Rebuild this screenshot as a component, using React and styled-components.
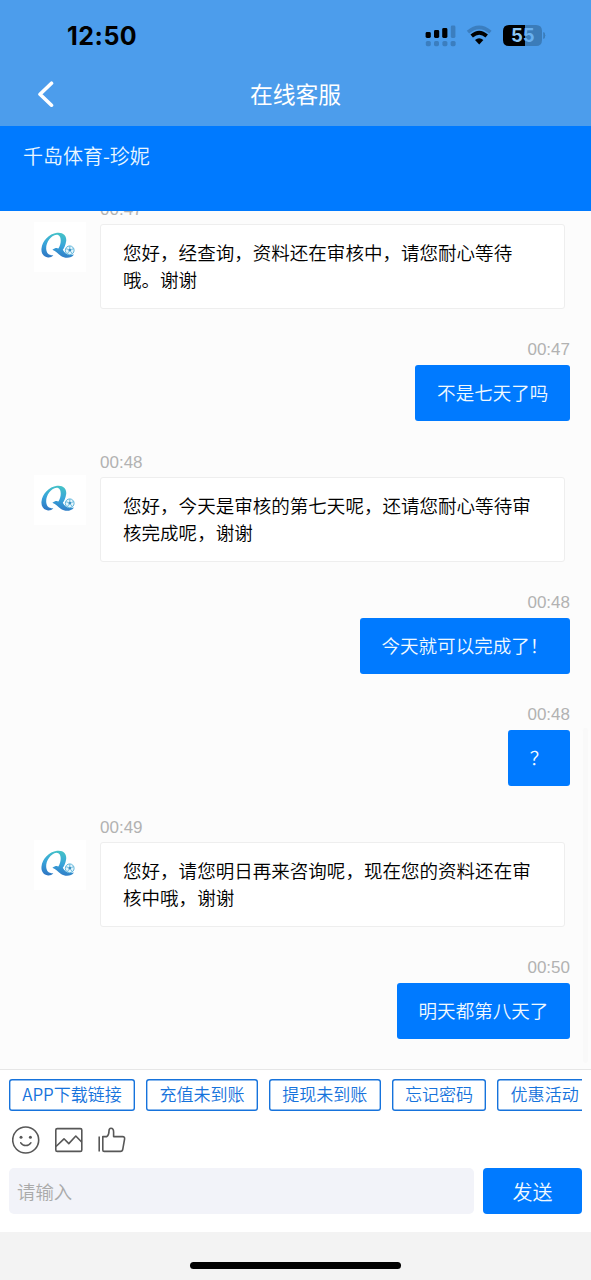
import styled, { createGlobalStyle } from 'styled-components';

const BLUE = '#007aff';
const HEADER = '#4c9dec';
const LINK = '#1673dc';

const messages = [
  { from: 'agent', time: '00:47', lines: ['您好，经查询，资料还在审核中，请您耐心等待', '哦。谢谢'] },
  { from: 'user', time: '00:47', lines: ['不是七天了吗'] },
  { from: 'agent', time: '00:48', lines: ['您好，今天是审核的第七天呢，还请您耐心等待审', '核完成呢，谢谢'] },
  { from: 'user', time: '00:48', lines: ['今天就可以完成了！'] },
  { from: 'user', time: '00:48', lines: ['？'] },
  { from: 'agent', time: '00:49', lines: ['您好，请您明日再来咨询呢，现在您的资料还在审', '核中哦，谢谢'] },
  { from: 'user', time: '00:50', lines: ['明天都第八天了'] },
];

const shortcuts = ['APP下载链接', '充值未到账', '提现未到账', '忘记密码', '优惠活动'];

export default function App() {
  return (
    <StyledPage>
      <GlobalStyle />
      <StyledHeader>
        <StyledStatus>
          <StyledClock>12:50</StyledClock>
          <StatusIcons />
        </StyledStatus>
        <StyledNav>
          <BackIcon />
          <h1>在线客服</h1>
          <span />
        </StyledNav>
      </StyledHeader>
      <StyledAgent>千岛体育-珍妮</StyledAgent>
      <StyledChat>
        {messages.map((message, i) => (
          <Message key={i} {...message} />
        ))}
        <StyledScrollbar />
      </StyledChat>
      <StyledFooter>
        <StyledShortcuts>
          {shortcuts.map((label) => (
            <StyledShortcut key={label}>{label}</StyledShortcut>
          ))}
        </StyledShortcuts>
        <StyledTools>
          <SmileIcon />
          <PictureIcon />
          <ThumbIcon />
        </StyledTools>
        <StyledForm>
          <StyledInput placeholder="请输入" />
          <StyledSend>发送</StyledSend>
        </StyledForm>
      </StyledFooter>
      <StyledHome>
        <span />
      </StyledHome>
    </StyledPage>
  );
}

function Message({ from, time, lines }) {
  const mine = from === 'user';
  return (
    <StyledMessage $mine={mine}>
      {!mine && (
        <StyledAvatar>
          <Logo />
        </StyledAvatar>
      )}
      <StyledBody $mine={mine}>
        <StyledTime $mine={mine}>{time}</StyledTime>
        <StyledBubble $mine={mine}>
          {lines.map((line) => (
            <p key={line}>{line}</p>
          ))}
        </StyledBubble>
      </StyledBody>
    </StyledMessage>
  );
}

function StatusIcons() {
  return (
    <svg width="122" height="26" viewBox="0 0 122 26">
      <g fill="#000">
        <rect x="0.6" y="9" width="5.2" height="6" rx="1.4" />
        <rect x="9" y="7" width="5.2" height="8" rx="1.4" />
        <rect x="17.2" y="5" width="5.2" height="10" rx="1.4" />
      </g>
      <g fill="#3b7ebf">
        <rect x="25.8" y="2.5" width="4.6" height="12.5" rx="1.4" />
        <rect x="0.8" y="18" width="5" height="5.2" rx="1.6" />
        <rect x="9" y="18" width="5" height="5.2" rx="1.6" />
        <rect x="17.4" y="18" width="5" height="5.2" rx="1.6" />
        <rect x="25.6" y="18" width="5" height="5.2" rx="1.6" />
      </g>
      <path d="M43 9.2 Q54.2 -0.4 65.4 9.2" fill="none" stroke="#3b7ebf" strokeWidth="3.6" />
      <path d="M46.7 13 Q54.2 6.4 61.7 13" fill="none" stroke="#000" strokeWidth="3.7" />
      <path d="M50 17 Q54.2 13.4 58.4 17 L54.2 21.6 Z" fill="#000" />
      <path d="M84 2 H100 V23 H84 Q78 23 78 17 V8 Q78 2 84 2 Z" fill="#000" />
      <path d="M100 2 H111 Q117 2 117 8 V17 Q117 23 111 23 H100 Z" fill="#3b7cb9" />
      <path d="M118.8 9.5 Q121 12.5 118.8 15.5 Z" fill="#3b7cb9" stroke="#3b7cb9" />
      <text x="97.8" y="19" textAnchor="middle" fontFamily="Inter, sans-serif" fontWeight="700" fontSize="18.5">
        <tspan fill="#8cc6f5">5</tspan>
        <tspan fill="#68b0f0">5</tspan>
      </text>
    </svg>
  );
}

function BackIcon() {
  return (
    <svg width="18" height="26" viewBox="0 0 18 26" fill="none">
      <path d="M15.5 2.2 L4 13.2 L15.5 24.2" stroke="#fff" strokeWidth="3.6" strokeLinecap="round" strokeLinejoin="round" />
    </svg>
  );
}

function Logo() {
  return (
    <svg width="36" height="30" viewBox="0 0 36 30">
      <defs>
        <linearGradient id="logo" x1="0.6" y1="0" x2="0.4" y2="1">
          <stop offset="0" stopColor="#45c3c6" />
          <stop offset="0.5" stopColor="#38a5da" />
          <stop offset="1" stopColor="#2f78c4" />
        </linearGradient>
      </defs>
      <path
        fill="url(#logo)"
        d="M16 1.8 C22 1 25.8 4.5 25.2 10 C24.6 14.5 23 17.2 21.8 18.8 C23.5 22.4 27 24.6 33 23.6 C30.5 27.4 24 27.8 20 25 C16.8 22.6 15 20 11.4 18.8 C14 16.6 15.8 16.6 17.4 17.4 C20.6 13 21 3.8 15.6 3.8 C9.5 4.6 4.8 12 5.2 18 C5.6 22.6 8 24.4 12.4 24.2 C10.8 25.8 9 26.6 7 26.4 C2.5 25.8 0 22.5 0.5 17.5 C1.2 10 8 2.8 16 1.8 Z"
      />
      <circle cx="28.7" cy="19.3" r="4.4" fill="#e3f4fb" stroke="#62b7dc" strokeWidth="1" />
      <path d="M27.3 18.5 L28.8 17.3 L30.4 18.5 L29.8 20.5 H27.8 Z" fill="#3f93c4" />
      <path d="M28.8 17.3 V15 M27.3 18.5 L24.8 17.6 M30.4 18.5 L32.8 17.6 M29.8 20.5 L31.2 22.8 M27.8 20.5 L26.5 22.8" stroke="#62b7dc" strokeWidth="0.9" />
    </svg>
  );
}

function SmileIcon() {
  return (
    <svg width="28" height="28" viewBox="0 0 28 28" fill="none" stroke="#575757" strokeWidth="1.6">
      <circle cx="13.7" cy="14" r="13" />
      <path d="M8.8 16.8 C11 20.4 16.6 20.4 18.8 16.8" strokeLinecap="round" />
      <circle cx="9" cy="11.2" r="1.5" fill="#575757" stroke="none" />
      <circle cx="18.4" cy="11.2" r="1.5" fill="#575757" stroke="none" />
    </svg>
  );
}

function PictureIcon() {
  return (
    <svg width="28" height="28" viewBox="0 0 28 28" fill="none" stroke="#575757" strokeWidth="1.6" strokeLinejoin="round">
      <rect x="0.8" y="2.6" width="26" height="22.8" rx="1.5" />
      <path d="M1 20.5 L9 12.8 L13.8 17.6 L20.8 10 L26.6 16" />
    </svg>
  );
}

function ThumbIcon() {
  return (
    <svg width="28" height="28" viewBox="0 0 28 28" fill="none" stroke="#575757" strokeWidth="1.6" strokeLinejoin="round">
      <path d="M1.2 10.5 V25.5" />
      <path d="M4.8 10.6 H8.8 C10.6 9.4 11 7.6 11 5 C11 3 11.8 2.2 13 2.2 C15 2.2 15.6 4 15.6 6 V10.6 H24.6 C26.2 10.6 26.8 11.4 26.6 12.8 L24.8 23.2 C24.6 24.6 23.8 25.4 22.4 25.4 H6.2 C5.2 25.4 4.8 24.8 4.8 24 Z" />
    </svg>
  );
}

const GlobalStyle = createGlobalStyle`
  * {
    box-sizing: border-box;
  }

  body {
    margin: 0;
    font-family: "Noto Sans CJK SC", sans-serif;
    font-weight: 350;
  }

  h1, p {
    margin: 0;
  }
`;

const StyledPage = styled.div`
  display: flex;
  flex-direction: column;
  width: 591px;
  height: 1280px;
  overflow: hidden;
  background: #fcfcfc;
`;

const StyledHeader = styled.header`
  height: 126px;
  flex-shrink: 0;
  background: ${HEADER};
`;

const StyledStatus = styled.div`
  display: flex;
  justify-content: space-between;
  align-items: center;
  height: 64px;
  padding: 7px 44px 0 67px;
`;

const StyledClock = styled.span`
  font-family: Inter, sans-serif;
  font-size: 25px;
  font-weight: 700;
  letter-spacing: 0.5px;
  color: #000;
`;

const StyledNav = styled.nav`
  display: grid;
  grid-template-columns: 60px 1fr 60px;
  align-items: center;
  height: 60px;
  padding: 0 36px;

  h1 {
    font-size: 22.8px;
    font-weight: 400;
    line-height: 34px;
    text-align: center;
    color: #fff;
  }
`;

const StyledAgent = styled.div`
  height: 85px;
  flex-shrink: 0;
  padding: 15px 23px;
  font-size: 20px;
  line-height: 30px;
  color: #e9f6ff;
  background: ${BLUE};
`;

const StyledChat = styled.main`
  position: relative;
  flex: 1;
  min-height: 0;
  display: flex;
  flex-direction: column;
  justify-content: flex-end;
  padding: 0 21px 30px 34px;
  overflow: hidden;
`;

const StyledScrollbar = styled.span`
  position: absolute;
  right: 3px;
  bottom: 6px;
  width: 5px;
  height: 335px;
  border-radius: 3px;
  background: #f9f9f9;
`;

const StyledMessage = styled.div`
  display: flex;
  flex-shrink: 0;
  justify-content: ${({ $mine }) => ($mine ? 'flex-end' : 'flex-start')};
  padding-top: ${({ $mine }) => ($mine ? '26px' : '27px')};
`;

const StyledAvatar = styled.div`
  display: flex;
  justify-content: center;
  width: 52px;
  height: 50px;
  margin: 27px 14px 0 0;
  padding: 9px 2px 0 0;
  background: #fff;
`;

const StyledBody = styled.div`
  display: flex;
  flex-direction: column;
  align-items: ${({ $mine }) => ($mine ? 'flex-end' : 'flex-start')};
`;

const StyledTime = styled.time`
  font-family: "Liberation Sans", Arial, sans-serif;
  font-size: 17px;
  font-weight: 400;
  line-height: ${({ $mine }) => ($mine ? '30px' : '29px')};
  color: #b2b2b2;
`;

const StyledBubble = styled.div`
  width: ${({ $mine }) => ($mine ? 'auto' : '465px')};
  padding: ${({ $mine }) => ($mine ? '12.5px 21.7px 16.5px' : '12.5px 22px 16.5px')};
  font-size: 18.55px;
  line-height: 27px;
  white-space: nowrap;
  color: ${({ $mine }) => ($mine ? '#f0f9ff' : '#000')};
  background: ${({ $mine }) => ($mine ? BLUE : '#fff')};
  border: ${({ $mine }) => ($mine ? 'none' : '1px solid #eee')};
  border-radius: 3px;
`;

const StyledFooter = styled.footer`
  display: flex;
  flex-direction: column;
  flex-shrink: 0;
  height: 163px;
  padding: 9px 9px 0;
  border-top: 1px solid #e6e6e6;
  background: #fff;
`;

const StyledShortcuts = styled.div`
  display: flex;
  gap: 11.2px;
  overflow: hidden;
`;

const StyledShortcut = styled.button`
  flex-shrink: 0;
  height: 32px;
  padding: 0 13.2px 2px;
  font-family: inherit;
  font-size: 17.05px;
  font-weight: 350;
  line-height: 28px;
  color: ${LINK};
  background: #fff;
  border: none;
  border-radius: 3px;
  box-shadow: inset 0 0 0 1.4px ${LINK};
`;

const StyledTools = styled.div`
  display: flex;
  gap: 15px;
  padding: 15px 3px 14px;
`;

const StyledForm = styled.div`
  display: flex;
  gap: 9px;
  height: 46px;
`;

const StyledInput = styled.input`
  flex: 1;
  min-width: 0;
  padding: 0 8px;
  font-family: inherit;
  font-size: 18.4px;
  font-weight: 350;
  background: #f2f3f9;
  border: none;
  border-radius: 5px;

  &::placeholder {
    color: #aaa;
  }
`;

const StyledSend = styled.button`
  width: 99px;
  padding: 0;
  font-family: inherit;
  font-size: 20px;
  font-weight: 350;
  color: #f0f9ff;
  background: ${BLUE};
  border: none;
  border-radius: 4px;
`;

const StyledHome = styled.div`
  display: flex;
  justify-content: center;
  height: 48px;
  flex-shrink: 0;
  padding-top: 30px;
  background: #f3f3f3;

  span {
    width: 211px;
    height: 7px;
    border-radius: 4px;
    background: #000;
  }
`;
